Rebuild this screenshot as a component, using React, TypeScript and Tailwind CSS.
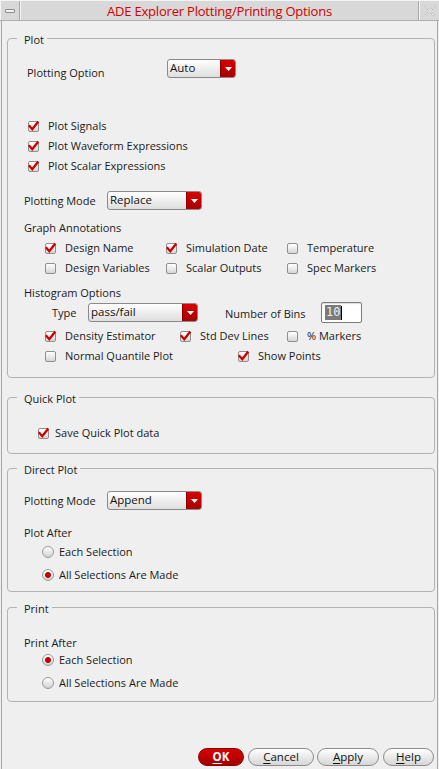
import React from "react";

const FONT = { fontFamily: '"Open Sans", "Noto Sans", sans-serif' };

function Check({ checked }: { checked?: boolean }) {
  return (
    <div className="w-[11px] h-[11px] shrink-0 rounded-[2px] border border-[#8f8f8f] bg-linear-to-b from-white to-[#d6d6d6] flex items-center justify-center overflow-visible">
      {checked && (
        <svg width="11" height="11" viewBox="0 0 11 11" className="overflow-visible">
          <path d="M1.6 5.2 L4.3 8.3 L9.6 1.4" fill="none" stroke="#cc0000" strokeWidth="2.3" strokeLinecap="square" />
        </svg>
      )}
    </div>
  );
}

function Radio({ checked }: { checked?: boolean }) {
  return (
    <div className="w-[12px] h-[12px] shrink-0 rounded-full border border-[#9a9a9a] bg-linear-to-b from-white to-[#d2d2d2] flex items-center justify-center">
      {checked && <div className="w-[6px] h-[6px] rounded-full bg-[#d00000] border border-[#a00000]" />}
    </div>
  );
}

function Drop({ text, w, h = 19 }: { text: string; w: number; h?: number }) {
  return (
    <div
      className="shrink-0 flex rounded-[3px] border border-[#8a8a8a] overflow-hidden bg-linear-to-b from-white to-[#dedede]"
      style={{ width: w, height: h }}
    >
      <div className="flex-1 pl-[2px] text-[11.5px] leading-[16px] text-[#111]">{text}</div>
      <div className="w-[15px] bg-linear-to-b from-[#d90000] to-[#a80000] flex items-center justify-center border-l border-[#900000]">
        <svg width="7" height="4" viewBox="0 0 7 4">
          <path d="M0 0 L7 0 L3.5 4 Z" fill="#ffffff" />
        </svg>
      </div>
    </div>
  );
}

function CB({ checked, label }: { checked?: boolean; label: string }) {
  return (
    <div className="flex items-center gap-[9px]">
      <Check checked={checked} />
      <span className="text-[11px] leading-[16px] whitespace-nowrap">{label}</span>
    </div>
  );
}

function Group({ title, h, mt, children }: { title: string; h: number; mt: number; children?: React.ReactNode }) {
  return (
    <div
      className="ml-[5px] w-[428px] border border-[#b2b2b2] rounded-[4px] flex flex-col shrink-0"
      style={{ height: h, marginTop: mt }}
    >
      <div className="-mt-[6px] ml-[9px] pl-[7px] pr-[3px] w-fit h-[14px] text-[11px] leading-[14px] bg-[#efefef]">
        {title}
      </div>
      {children}
    </div>
  );
}

function Btn({ label, w, primary }: { label: string; w: number; primary?: boolean }) {
  const first = label[0];
  const rest = label.slice(1);
  return (
    <div
      className={
        "h-[18px] rounded-full flex items-center justify-center text-[11.5px] leading-[16px] " +
        (primary
          ? "bg-linear-to-b from-[#d80000] to-[#a40000] border border-[#8a0000] text-white font-bold"
          : "bg-linear-to-b from-white to-[#d6d6d6] border border-[#8c8c8c] text-[#111]")
      }
      style={{ width: w }}
    >
      <span>
        <span className="underline underline-offset-2">{first}</span>
        {rest}
      </span>
    </div>
  );
}

export default function App() {
  return (
    <div className="w-[439px] h-[769px] overflow-hidden bg-[#efefef] flex flex-col text-[#1a1a1a]" style={FONT}>
      {/* Title bar */}
      <div className="h-[21px] flex bg-[#d8d8d8] border-t border-[#f4f4f4] border-b border-b-[#b0b0b0] shrink-0">
        <div className="w-[20px] border-l border-[#f4f4f4] border-r border-r-[#a8a8a8] flex items-center justify-center">
          <div className="w-[10px] h-[4px] rounded-[1px] border border-[#8a8a8a] bg-[#f4f4f4]" />
        </div>
        <div className="flex-1 border-l border-[#f4f4f4] border-r border-r-[#a8a8a8] flex items-center justify-center text-[13px] leading-[18px] text-[#d00000] tracking-[-0.2px]">
          ADE Explorer Plotting/Printing Options
        </div>
        <div className="w-[20px] border-l border-[#f4f4f4] flex items-center justify-center">
          <svg width="12" height="12" viewBox="0 0 12 12">
            <path d="M1 1 L11 11 M11 1 L1 11" stroke="#b8b8b8" strokeWidth="2" strokeDasharray="1.5 1.5" fill="none" />
            <path d="M1 1 L11 11 M11 1 L1 11" stroke="#ffffff" strokeWidth="0.8" fill="none" opacity="0.6" />
          </svg>
        </div>
      </div>

      {/* Body */}
      <div className="flex-1 mx-px border-x border-[#a6a6a6] flex flex-col">
        {/* Plot */}
        <Group title="Plot" h={340} mt={17}>
          <div className="mt-[12px] flex items-start pl-[19px]">
            <div className="w-[140px] mt-[6px] text-[11px] leading-[16px]">Plotting Option</div>
            <Drop text="Auto" w={69} />
          </div>
          <div className="mt-[35px] flex flex-col pl-[20px]">
            <div className="h-[20px] flex items-center"><CB checked label="Plot Signals" /></div>
            <div className="h-[20px] flex items-center"><CB checked label="Plot Waveform Expressions" /></div>
            <div className="h-[20px] flex items-center"><CB checked label="Plot Scalar Expressions" /></div>
          </div>
          <div className="mt-[15px] h-[19px] flex items-center pl-[16px]">
            <div className="w-[83px] text-[11px] leading-[16px]">Plotting Mode</div>
            <Drop text="Replace" w={95} />
          </div>
          <div className="mt-[10px] h-[16px] pl-[16px] text-[11px] leading-[16px]">Graph Annotations</div>
          <div className="mt-[2px] pl-[37px] grid grid-cols-[121px_121px_1fr]">
            <div className="h-[20px] flex items-center"><CB checked label="Design Name" /></div>
            <div className="h-[20px] flex items-center"><CB checked label="Simulation Date" /></div>
            <div className="h-[20px] flex items-center"><CB label="Temperature" /></div>
            <div className="h-[20px] flex items-center"><CB label="Design Variables" /></div>
            <div className="h-[20px] flex items-center"><CB label="Scalar Outputs" /></div>
            <div className="h-[20px] flex items-center"><CB label="Spec Markers" /></div>
          </div>
          <div className="mt-[7px] h-[16px] pl-[16px] text-[11px] leading-[16px]">Histogram Options</div>
          <div className="mt-[1px] h-[21px] flex items-center pl-[44px]">
            <div className="w-[36px] text-[11px] leading-[16px]">Type</div>
            <Drop text="pass/fail" w={110} />
            <div className="ml-[27px] w-[96px] mt-[3px] text-[11px] leading-[16px]">Number of Bins</div>
            <div className="w-[41px] h-[21px] bg-white border border-[#7c7c7c] rounded-[2px] flex items-center pl-[3px] shadow-[inset_0_1px_1px_rgba(0,0,0,0.15)]">
              <span
                className="bg-[#7b7b7b] text-[#f0f0f0] text-[12px] leading-[15px] px-[1px]"
                style={{ fontFamily: '"DejaVu Sans Mono", monospace' }}
              >
                10
              </span>
              <span className="w-px h-[14px] bg-black" />
            </div>
          </div>
          <div className="mt-[3px] pl-[37px] grid grid-cols-[135px_107px_1fr]">
            <div className="h-[20px] flex items-center"><CB checked label="Density Estimator" /></div>
            <div className="h-[20px] flex items-center"><CB checked label="Std Dev Lines" /></div>
            <div className="h-[20px] flex items-center"><CB label="% Markers" /></div>
          </div>
          <div className="pl-[37px] grid grid-cols-[193px_1fr]">
            <div className="h-[20px] flex items-center"><CB label="Normal Quantile Plot" /></div>
            <div className="h-[20px] flex items-center"><CB checked label="Show Points" /></div>
          </div>
        </Group>

        {/* Quick Plot */}
        <Group title="Quick Plot" h={57} mt={19}>
          <div className="mt-[17px] h-[20px] pl-[30px] flex items-center gap-[6px]">
            <Check checked />
            <span className="text-[11px] leading-[16px]">Save Quick Plot data</span>
          </div>
        </Group>

        {/* Direct Plot */}
        <Group title="Direct Plot" h={124} mt={14}>
          <div className="mt-[14px] h-[19px] flex items-center pl-[16px]">
            <div className="w-[83px] text-[11px] leading-[16px]">Plotting Mode</div>
            <Drop text="Append" w={95} />
          </div>
          <div className="mt-[15px] h-[16px] pl-[16px] text-[11px] leading-[16px]">Plot After</div>
          <div className="mt-[1px] h-[20px] pl-[34px] flex items-center gap-[5px]">
            <Radio />
            <span className="text-[11px] leading-[16px]">Each Selection</span>
          </div>
          <div className="mt-[3px] h-[20px] pl-[34px] flex items-center gap-[5px]">
            <Radio checked />
            <span className="text-[11px] leading-[16px]">All Selections Are Made</span>
          </div>
        </Group>

        {/* Print */}
        <Group title="Print" h={95} mt={15}>
          <div className="mt-[19px] h-[16px] pl-[16px] text-[11px] leading-[16px]">Print After</div>
          <div className="h-[18px] pl-[34px] flex items-center gap-[5px]">
            <Radio checked />
            <span className="text-[11px] leading-[16px]">Each Selection</span>
          </div>
          <div className="mt-[5px] h-[18px] pl-[34px] flex items-center gap-[5px]">
            <Radio />
            <span className="text-[11px] leading-[16px]">All Selections Are Made</span>
          </div>
        </Group>

        {/* Buttons */}
        <div className="mt-[46px] flex justify-end pr-[3px]">
          <Btn label="OK" w={46} primary />
          <div className="w-[4px]" />
          <Btn label="Cancel" w={66} />
          <div className="w-[3px]" />
          <Btn label="Apply" w={62} />
          <div className="w-[4px]" />
          <Btn label="Help" w={51} />
        </div>
      </div>
    </div>
  );
}
